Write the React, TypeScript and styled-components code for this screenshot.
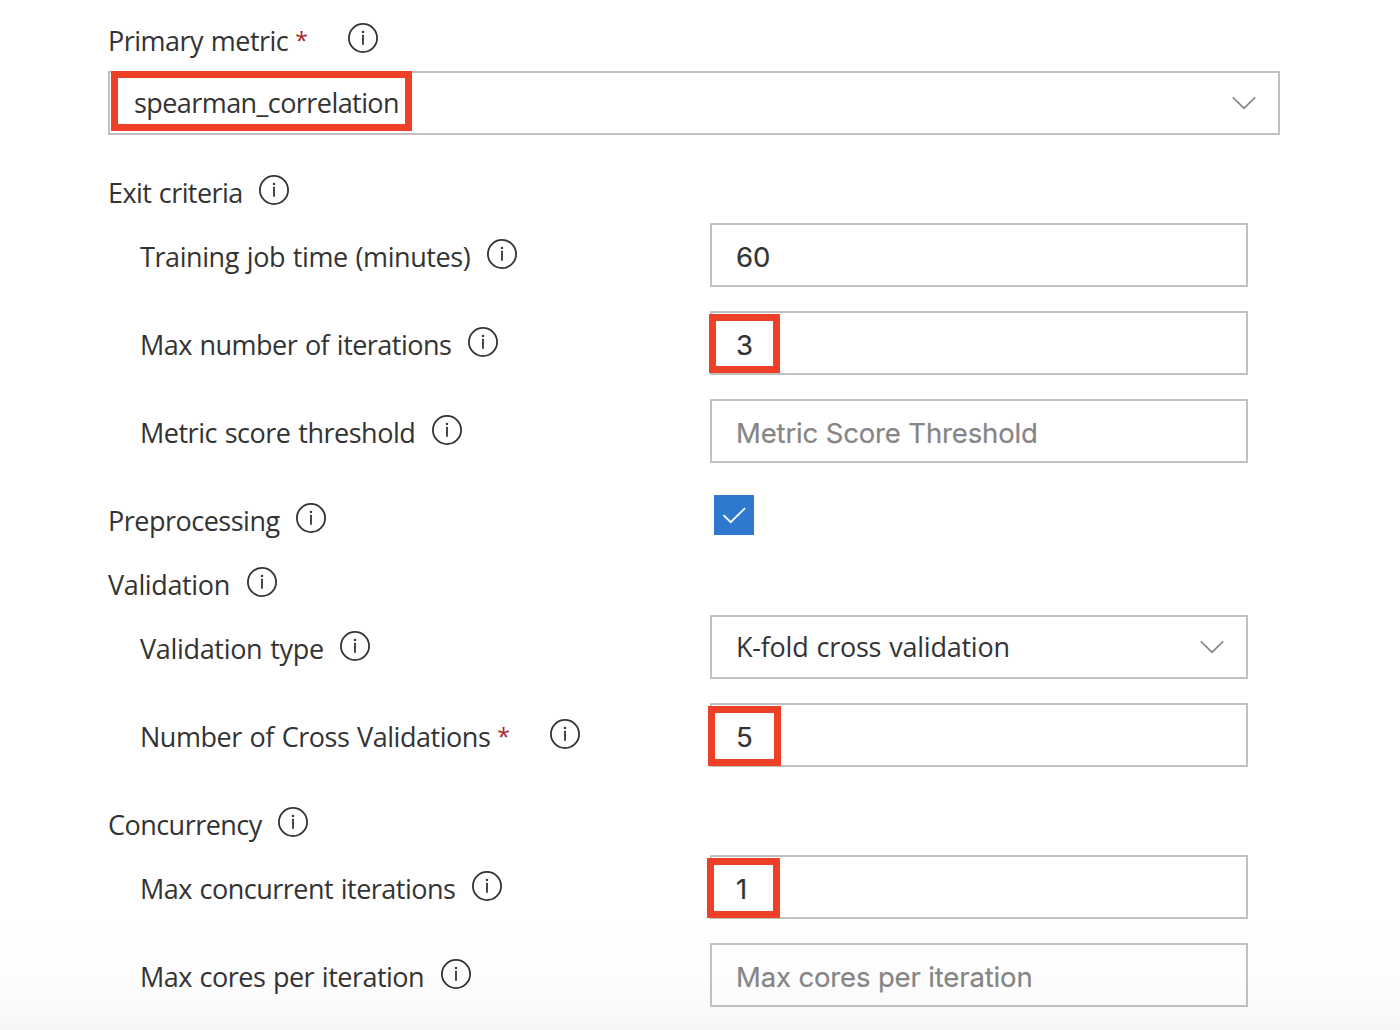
import React from "react";
import styled, { createGlobalStyle } from "styled-components";

const GlobalStyle = createGlobalStyle`
  * { box-sizing: border-box; }
  body { margin: 0; background: #fff; }
`;

const uiFont = `"Open Sans", "Noto Sans", sans-serif`;
const inputFont = `Inter, "Liberation Sans", sans-serif`;
const ink = "#333333";
const line = "#c0c0c0";

const Page = styled.main`
  width: 1400px;
  height: 1030px;
  overflow: hidden;
  padding: 7px 120px 0 108px;
  background: linear-gradient(to bottom, #ffffff 920px, #fdfdfd 975px, #fafafa 1008px, #f5f5f5 1030px);
  color: ${ink};
  font-family: ${uiFont};
`;

const HeaderRow = styled.div`
  display: grid;
  grid-template-columns: 606px 1fr;
  height: 64px;
`;

const FieldRow = styled.div`
  display: grid;
  grid-template-columns: 570px 538px;
  height: 64px;
  margin: 0 0 24px 32px;
`;

const LabelGroup = styled.div`
  display: flex;
  align-items: flex-start;
`;

const LabelText = styled.label<{ $tracking: number }>`
  font-size: 27px;
  line-height: 67px;
  letter-spacing: ${(p) => p.$tracking}px;
  word-spacing: 1.2px;
  white-space: pre;
`;

const Star = styled.span`
  width: 43px;
  padding-left: 7px;
  font-size: 23px;
  line-height: 66px;
  color: #a4262c;
`;

const InfoSvg = styled.svg`
  flex: none;
  width: 30px;
  height: 30px;
  margin: 16px 0 0 16.6px;
`;

const FieldWrap = styled.div<{ $gapBelow?: number }>`
  position: relative;
  height: 64px;
  margin-bottom: ${(p) => p.$gapBelow ?? 0}px;
`;

const TextInput = styled.input`
  display: block;
  width: 100%;
  height: 64px;
  padding: 4px 24px 0;
  border: 2px solid ${line};
  border-radius: 0;
  outline: none;
  background: transparent;
  color: ${ink};
  font-family: ${inputFont};
  font-size: 27.5px;
  letter-spacing: -0.15px;
  -webkit-text-stroke: 0.2px currentColor;
  &::placeholder {
    color: #858585;
    opacity: 1;
  }
`;

const SelectBox = styled.div<{ $tracking: number }>`
  display: flex;
  align-items: center;
  justify-content: space-between;
  height: 64px;
  padding: 0 22px 0 24px;
  border: 2px solid ${line};
  font-size: 27px;
  line-height: 60px;
  letter-spacing: ${(p) => p.$tracking}px;
  word-spacing: 1.2px;
`;

const ChevronSvg = styled.svg`
  width: 24px;
  height: 14px;
`;

const Highlight = styled.span<{ $x: number; $y: number; $w: number; $h: number }>`
  position: absolute;
  left: ${(p) => p.$x}px;
  top: ${(p) => p.$y}px;
  width: ${(p) => p.$w}px;
  height: ${(p) => p.$h}px;
  border: 7px solid #ee4026;
  pointer-events: none;
`;

const Checkbox = styled.span`
  display: block;
  width: 40px;
  height: 40px;
  margin-top: 8px;
  background: #2f78d0;
`;

const Info = () => (
  <InfoSvg viewBox="0 0 30 30" fill="none">
    <circle cx="15" cy="15" r="14.1" stroke={ink} strokeWidth="1.8" />
    <path d="M15 11.7V21.7" stroke={ink} strokeWidth="1.8" />
    <circle cx="15" cy="8.9" r="1.2" fill={ink} />
  </InfoSvg>
);

const Chevron = () => (
  <ChevronSvg viewBox="0 0 24 14" fill="none">
    <path d="M0.8 1.2L12 12.4L23.2 1.2" stroke="#808080" strokeWidth="1.6" />
  </ChevronSvg>
);

type LabelProps = { text: string; tracking: number; required?: boolean };

const Label = ({ text, tracking, required }: LabelProps) => (
  <LabelGroup>
    <LabelText $tracking={tracking}>{text}</LabelText>
    {required && <Star>*</Star>}
    <Info />
  </LabelGroup>
);

type Mark = { x: number; y: number; w: number; h: number };
const Marked = ({ mark }: { mark: Mark }) => (
  <Highlight $x={mark.x} $y={mark.y} $w={mark.w} $h={mark.h} />
);

type InputFieldProps = LabelProps & { value?: string; placeholder?: string; mark?: Mark };

const InputField = ({ value, placeholder, mark, ...label }: InputFieldProps) => (
  <FieldRow>
    <Label {...label} />
    <FieldWrap>
      <TextInput type="text" defaultValue={value} placeholder={placeholder} />
      {mark && <Marked mark={mark} />}
    </FieldWrap>
  </FieldRow>
);

export default function App() {
  return (
    <>
      <GlobalStyle />
      <Page>
        <HeaderRow>
          <Label text="Primary metric" tracking={-0.51} required />
        </HeaderRow>
        <FieldWrap $gapBelow={24}>
          <SelectBox $tracking={-0.57}>
            spearman_correlation
            <Chevron />
          </SelectBox>
          <Marked mark={{ x: 2.6, y: -0.4, w: 301.6, h: 60 }} />
        </FieldWrap>

        <HeaderRow>
          <Label text="Exit criteria" tracking={-0.59} />
        </HeaderRow>
        <InputField text="Training job time (minutes)" tracking={-0.42} value="60" />
        <InputField
          text="Max number of iterations"
          tracking={-0.527}
          value="3"
          mark={{ x: -1.4, y: 2.6, w: 71.6, h: 59 }}
        />
        <InputField text="Metric score threshold" tracking={-0.482} placeholder="Metric Score Threshold" />

        <HeaderRow>
          <Label text="Preprocessing" tracking={-0.5} />
          <Checkbox role="checkbox" aria-checked="true">
            <svg width="40" height="40" viewBox="0 0 40 40" fill="none">
              <path d="M9.5 20.2L16.7 27.2L31 13.2" stroke="#fff" strokeWidth="1.8" />
            </svg>
          </Checkbox>
        </HeaderRow>
        <HeaderRow>
          <Label text="Validation" tracking={-0.36} />
        </HeaderRow>
        <FieldRow>
          <Label text="Validation type" tracking={-0.32} />
          <FieldWrap>
            <SelectBox $tracking={-0.235}>
              K-fold cross validation
              <Chevron />
            </SelectBox>
          </FieldWrap>
        </FieldRow>
        <InputField
          text="Number of Cross Validations"
          tracking={-0.468}
          required
          value="5"
          mark={{ x: -2.2, y: 2.8, w: 73, h: 60.2 }}
        />

        <HeaderRow>
          <Label text="Concurrency" tracking={-0.53} />
        </HeaderRow>
        <InputField
          text="Max concurrent iterations"
          tracking={-0.517}
          value="1"
          mark={{ x: -3, y: 3, w: 73, h: 60 }}
        />
        <InputField text="Max cores per iteration" tracking={-0.513} placeholder="Max cores per iteration" />
      </Page>
    </>
  );
}
